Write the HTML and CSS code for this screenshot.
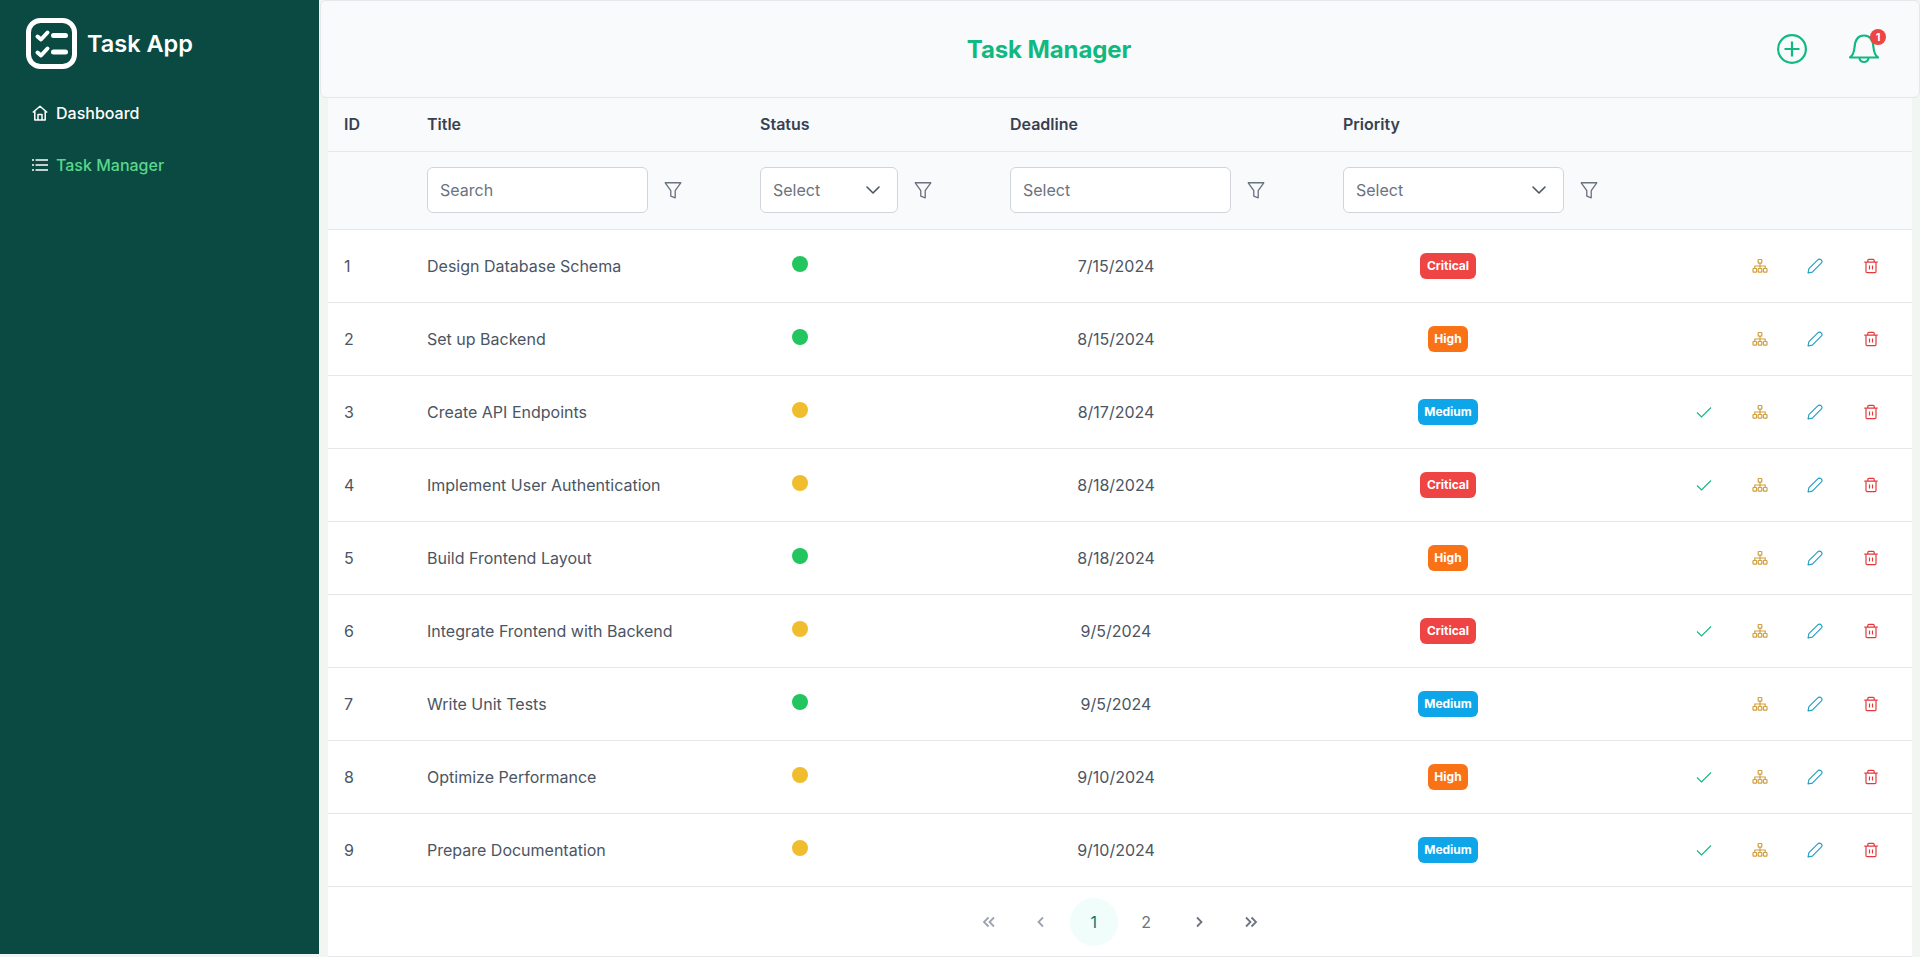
FILE: index.html
```html
<!DOCTYPE html>
<html lang="en">
<head>
    <meta charset="UTF-8">
    <meta name="viewport" content="width=device-width, initial-scale=1.0">
    <title>Task App</title>
    <link rel="stylesheet" href="styles.css">
</head>
<body>
    <svg class="icon-defs" width="0" height="0">
        <symbol id="i-filter" viewBox="0 0 18 18"><path d="M2 2.500h14l-5 7v6.500l-4-1.500v-5z" fill="none" stroke="currentColor" stroke-width="1.200" stroke-linejoin="round"/></symbol>
        <symbol id="i-chevron" viewBox="0 0 16 16"><path d="M2 5l6 6 6-6" fill="none" stroke="currentColor" stroke-width="1.600" stroke-linecap="round" stroke-linejoin="round"/></symbol>
        <symbol id="i-check" viewBox="0 0 16 16"><path d="M1 8.500l4.500 4.500L15 3.500" fill="none" stroke="currentColor" stroke-width="1.100"/></symbol>
        <symbol id="i-sitemap" viewBox="0 0 16 16"><g fill="none" stroke="currentColor" stroke-width="1.200"><rect x="6.200" y="1.500" width="3.600" height="3.600" rx=".6"/><rect x="1" y="10.500" width="3.600" height="3.600" rx=".6"/><rect x="6.200" y="10.500" width="3.600" height="3.600" rx=".6"/><rect x="11.400" y="10.500" width="3.600" height="3.600" rx=".6"/><path d="M8 5.100v5.400M2.800 10.500V8h10.400v2.500"/></g></symbol>
        <symbol id="i-pencil" viewBox="0 0 16 16"><path d="M1 15l.9-4.300L10.800 1.800a2 2 0 0 1 3.400 3.400L5.300 14.100z" fill="none" stroke="currentColor" stroke-width="1.100" stroke-linejoin="round"/></symbol>
        <symbol id="i-trash" viewBox="0 0 16 16"><g fill="none" stroke="currentColor" stroke-width="1.200"><path d="M1.300 4.200h13.400M4.800 4.200V2.400c0-.6.400-1 1-1h4.400c.6 0 1 .4 1 1v1.800"/><path d="M3 4.200v9.400c0 .7.500 1.100 1.100 1.100h7.800c.6 0 1.100-.4 1.100-1.100V4.200M6.500 7.400v4.200M9.500 7.400v4.200"/></g></symbol>
    </svg>

    <div class="layout">
        <aside class="sidebar">
            <div class="brand">
                <svg class="brand-logo" viewBox="0 0 51 51" fill="none" stroke="#fff" stroke-linecap="round" stroke-linejoin="round">
                    <rect x="2.500" y="2.500" width="46" height="46" rx="12" stroke-width="5"/>
                    <path d="M11.500 18.500l3.500 3 6.500-7M11.500 34.500l3.500 3 6.500-7" stroke-width="4"/>
                    <path d="M27.500 17.500h12M27.500 34h12" stroke-width="5"/>
                </svg>
                <span class="brand-name">Task App</span>
            </div>
            <nav class="nav">
                <a class="nav-item" href="#">
                    <svg class="nav-icon" viewBox="0 0 16 16" fill="none" stroke="currentColor" stroke-width="1.500" stroke-linejoin="round"><path d="M.8 7.500L8 1.300l7.200 6.200M2.800 6v9h10.400V6M6 15V9.500h4V15"/></svg>
                    Dashboard
                </a>
                <a class="nav-item active nav-list" href="#">
                    <svg class="nav-icon" viewBox="0 0 16 16" fill="none" stroke="#fff" stroke-width="1.700"><path d="M3.500 3H16M3.500 8H16M3.500 13H16M0 3h2M0 8h2M0 13h2"/></svg>
                    Task Manager
                </a>
            </nav>
        </aside>

        <main class="main">
            <header class="topbar">
                <h1 class="page-title">Task Manager</h1>
                <div class="topbar-actions">
                    <svg class="topbar-icon" viewBox="0 0 30 30" fill="none" stroke="currentColor" stroke-width="2.200"><circle cx="15" cy="15" r="13.900"/><path d="M15 7.500v15M7.500 15h15"/></svg>
                    <div class="bell">
                        <svg class="topbar-icon" viewBox="0 0 30 30" fill="none" stroke="currentColor" stroke-width="2.200" stroke-linejoin="round"><path d="M1 23.500h28c-3-2-4-5-4.500-10C24 6 20.500 1.500 15 1.500S6 6 5.500 13.500C5 18.500 4 21.500 1 23.500zM10.500 23.500c0 6 9 6 9 0"/></svg>
                        <span class="bell-badge">1</span>
                    </div>
                </div>
            </header>

            <section class="card">
                <table class="tasks">
                    <colgroup>
                        <col class="col-id"><col class="col-title"><col class="col-status"><col class="col-deadline"><col class="col-priority"><col>
                    </colgroup>
                    <thead>
                        <tr class="head-row">
                            <th>ID</th><th>Title</th><th>Status</th><th>Deadline</th><th>Priority</th><th></th>
                        </tr>
                        <tr class="filter-row">
                            <th></th>
                            <th><div class="filter"><input class="field" type="text" placeholder="Search"><svg class="filter-icon"><use href="#i-filter"/></svg></div></th>
                            <th><div class="filter"><div class="field select narrow"><span>Select</span><svg class="chevron"><use href="#i-chevron"/></svg></div><svg class="filter-icon"><use href="#i-filter"/></svg></div></th>
                            <th><div class="filter"><input class="field" type="text" placeholder="Select"><svg class="filter-icon"><use href="#i-filter"/></svg></div></th>
                            <th><div class="filter"><div class="field select"><span>Select</span><svg class="chevron"><use href="#i-chevron"/></svg></div><svg class="filter-icon"><use href="#i-filter"/></svg></div></th>
                            <th></th>
                        </tr>
                    </thead>
                    <tbody id="rows"></tbody>
                </table>
                <div class="pager">
                    <span class="page-btn muted"><svg viewBox="0 0 14 14"><path d="M6.500 2.500L2 7l4.500 4.500M12 2.500L7.500 7l4.500 4.500"/></svg></span>
                    <span class="page-btn muted"><svg viewBox="0 0 14 14"><path d="M9 2.500L4.500 7 9 11.500"/></svg></span>
                    <span class="page-btn current">1</span>
                    <span class="page-btn">2</span>
                    <span class="page-btn"><svg viewBox="0 0 14 14"><path d="M5 2.500L9.500 7 5 11.500"/></svg></span>
                    <span class="page-btn"><svg viewBox="0 0 14 14"><path d="M2 2.500L6.500 7 2 11.500M7.500 2.500L12 7l-4.500 4.500"/></svg></span>
                </div>
            </section>
        </main>
    </div>

    <script>
        const tasks = [
            [1, 'Design Database Schema', 'done', '7/15/2024', 'Critical', false],
            [2, 'Set up Backend', 'done', '8/15/2024', 'High', false],
            [3, 'Create API Endpoints', 'pending', '8/17/2024', 'Medium', true],
            [4, 'Implement User Authentication', 'pending', '8/18/2024', 'Critical', true],
            [5, 'Build Frontend Layout', 'done', '8/18/2024', 'High', false],
            [6, 'Integrate Frontend with Backend', 'pending', '9/5/2024', 'Critical', true],
            [7, 'Write Unit Tests', 'done', '9/5/2024', 'Medium', false],
            [8, 'Optimize Performance', 'pending', '9/10/2024', 'High', true],
            [9, 'Prepare Documentation', 'pending', '9/10/2024', 'Medium', true]
        ];

        const icon = (name, cls) => `<span class="action ${cls}"><svg><use href="#i-${name}"/></svg></span>`;

        document.getElementById('rows').innerHTML = tasks.map(t => `
            <tr>
                <td>${t[0]}</td>
                <td>${t[1]}</td>
                <td><div class="status-wrap"><span class="dot ${t[2]}"></span></div></td>
                <td><div class="date-wrap">${t[3]}</div></td>
                <td><div class="priority-wrap"><span class="badge ${t[4].toLowerCase()}">${t[4]}</span></div></td>
                <td><div class="actions">${t[5] ? icon('check', 'check') : '<span class="action"></span>'}${icon('sitemap', 'tree')}${icon('pencil', 'edit')}${icon('trash', 'trash')}</div></td>
            </tr>`).join('');
    </script>
</body>
</html>
```

FILE: styles.css
```css
* {
    box-sizing: border-box;
}

html, body {
    margin: 0;
    padding: 0;
    height: 100%;
}

body {
    font-family: 'Inter', 'Noto Sans', sans-serif;
    background-color: #f1f6f3;
    color: #4b5563;
    overflow: hidden;
}

.icon-defs {
    position: absolute;
}

.layout {
    display: flex;
    height: 957px;
}

.sidebar {
    width: 319px;
    height: 954px;
    background-color: #0a4a42;
    flex-shrink: 0;
}

.brand {
    display: flex;
    align-items: center;
    gap: 10px;
    padding: 18px 0 0 26px;
}

.brand-logo {
    width: 51px;
    height: 51px;
}

.brand-name {
    color: #fff;
    font-size: 23.5px;
    font-weight: 600;
}

.nav {
    display: flex;
    flex-direction: column;
    padding: 18px 0 0 32px;
}

.nav-item {
    display: flex;
    align-items: center;
    gap: 8px;
    height: 52px;
    color: #fff;
    font-size: 16px;
    font-weight: 500;
    text-decoration: none;
}

.nav-item.active {
    color: #5ad68a;
}

.nav-icon {
    width: 16px;
    height: 16px;
}

.main {
    flex: 1;
    margin-left: 1px;
    min-width: 0;
}

.topbar {
    position: relative;
    display: flex;
    align-items: center;
    justify-content: center;
    height: 98px;
    background-color: #f9fafb;
    border: 1px solid #e5e7eb;
    border-radius: 6px;
}

.page-title {
    margin: 0 0 0 -142px;
    color: #10b981;
    font-size: 24px;
    font-weight: 700;
    letter-spacing: -0.1px;
}

.topbar-actions {
    position: absolute;
    top: 33px;
    right: 40px;
    display: flex;
    gap: 42px;
    color: #10b981;
}

.topbar-icon {
    display: block;
    width: 30px;
    height: 30px;
}

.bell {
    position: relative;
}

.bell-badge {
    position: absolute;
    top: -5px;
    right: -7px;
    width: 16px;
    height: 16px;
    border-radius: 50%;
    background-color: #ef4444;
    color: #fff;
    font-size: 11px;
    font-weight: 700;
    line-height: 16px;
    text-align: center;
}

.card {
    margin: 0 8px;
    background-color: #fff;
}

.tasks {
    width: 100%;
    border-collapse: collapse;
    table-layout: fixed;
    font-size: 16px;
}

.col-id { width: 83px; }
.col-title { width: 333px; }
.col-status { width: 250px; }
.col-deadline { width: 333px; }
.col-priority { width: 333px; }

.tasks th {
    padding: 0 16px;
    background-color: #f9fafb;
    border-bottom: 1px solid #e5e7eb;
    color: #374151;
    font-size: 16px;
    font-weight: 600;
    text-align: left;
}

.head-row {
    height: 53px;
}

.filter-row {
    height: 78px;
}

.filter {
    display: flex;
    align-items: center;
    gap: 15px;
}

.field {
    display: block;
    width: 221px;
    height: 46px;
    padding: 0 12px;
    background-color: #fff;
    border: 1px solid #d1d5db;
    border-radius: 6px;
    color: #6b7280;
    font-family: inherit;
    font-size: 16px;
    font-weight: 400;
}

.field::placeholder {
    color: #6b7280;
    opacity: 1;
}

.select {
    display: flex;
    align-items: center;
    justify-content: space-between;
    padding-right: 16px;
}

.select.narrow {
    width: 138px;
}

.chevron {
    width: 16px;
    height: 16px;
    color: #4b5563;
}

.filter-icon {
    width: 20px;
    height: 20px;
    color: #6b7280;
}

.tasks td {
    height: 73px;
    padding: 0 16px;
    border-bottom: 1px solid #e5e7eb;
    font-size: 16px;
}

.status-wrap {
    width: 80px;
    text-align: center;
}

.dot {
    display: inline-block;
    width: 16px;
    height: 16px;
    margin-bottom: 5px;
    border-radius: 50%;
    vertical-align: middle;
}

.dot.done {
    background-color: #22c55e;
}

.dot.pending {
    background-color: #f0bd2f;
}

.date-wrap {
    width: 212px;
    text-align: center;
}

.priority-wrap {
    width: 210px;
    text-align: center;
}

.badge {
    display: inline-block;
    height: 26px;
    padding: 0 6.5px;
    border-radius: 6px;
    color: #fff;
    font-size: 12px;
    font-weight: 700;
    line-height: 26px;
    vertical-align: middle;
}

.badge.critical { background-color: #ef4444; }
.badge.high { background-color: #f97316; }
.badge.medium { background-color: #0ea5e9; }

.actions {
    display: flex;
    justify-content: flex-end;
    margin-right: -3px;
}

.action {
    display: flex;
    align-items: center;
    justify-content: center;
    width: 56px;
    height: 24px;
}

.action svg {
    width: 16px;
    height: 16px;
}

.action.check { color: #10b981; }
.action.tree { color: #d29f3f; }
.action.edit { color: #1f9cc2; }
.action.trash { color: #e5383b; }

.pager {
    display: flex;
    align-items: center;
    justify-content: center;
    gap: 4.4px;
    height: 70px;
    padding-top: 1px;
    border-bottom: 1px solid #e5e7eb;
}

.page-btn {
    display: flex;
    align-items: center;
    justify-content: center;
    width: 48px;
    height: 48px;
    border-radius: 50%;
    color: #6b7280;
    font-size: 16px;
}

.page-btn svg {
    width: 14px;
    height: 14px;
    fill: none;
    stroke: currentColor;
    stroke-width: 1.800;
}

.page-btn.muted {
    color: #9ca3af;
}

.page-btn.current {
    background-color: #f0fdfa;
    color: #0f766e;
}
```
